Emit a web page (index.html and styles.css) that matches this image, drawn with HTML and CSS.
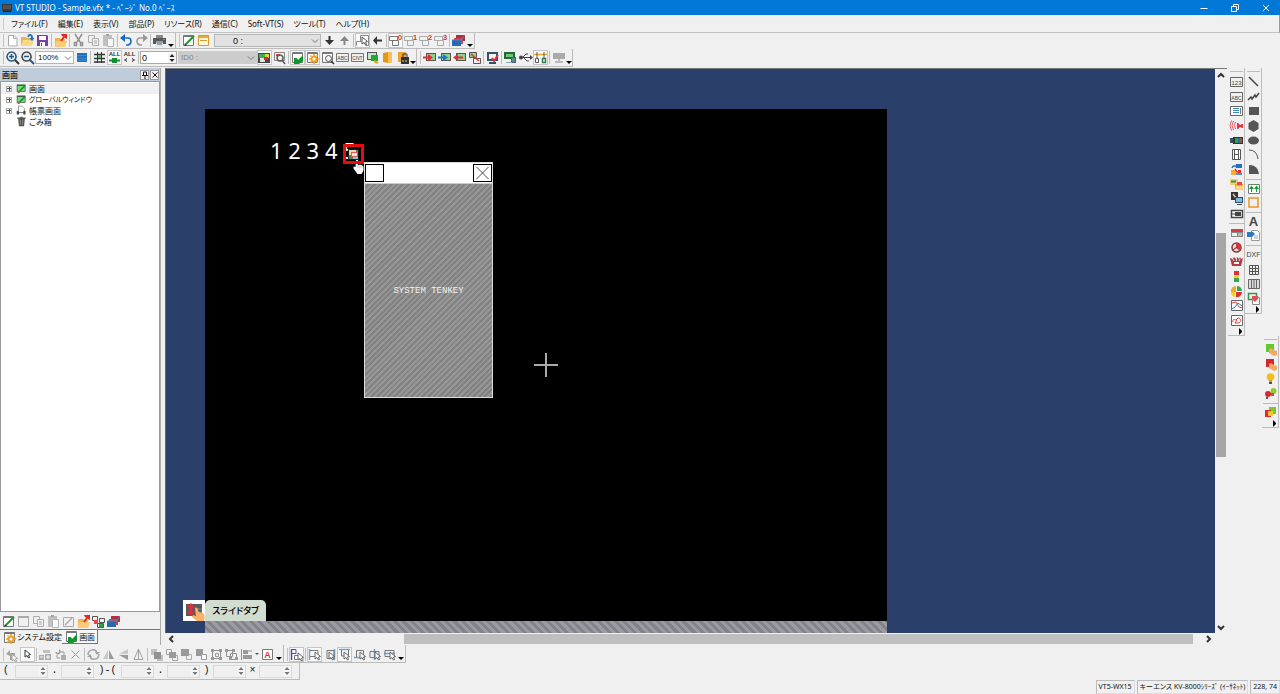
FILE: index.html
```html
<!DOCTYPE html>
<html lang="ja">
<head>
<meta charset="utf-8">
<title>VT STUDIO</title>
<link rel="stylesheet" href="styles.css">
</head>
<body>
<header class="titlebar">
  <svg class="logo" viewBox="0 0 12 10"><path d="M1 1h10v7H1z" fill="#3b3b3b"/><path d="M2 2h8v4H2z" fill="#55504c"/><path d="M2 8h8v1H2z" fill="#222"/></svg>
  <h1>VT STUDIO - Sample.vfx * - ﾍﾟｰｼﾞ No.0 ﾍﾞｰｽ</h1>
  <div class="winbtns">
    <button aria-label="最小化"><svg viewBox="0 0 10 10"><path d="M1.500 5.500h7" /></svg></button>
    <button aria-label="元に戻す"><svg viewBox="0 0 10 10"><path d="M1.500 3.500h5v5h-5zM3.500 3.500v-2h5v5h-2"/></svg></button>
    <button aria-label="閉じる"><svg viewBox="0 0 10 10"><path d="M2 2l6 6M8 2l-6 6"/></svg></button>
  </div>
</header>
<nav class="menubar">
  <button>ファイル(F)</button><button>編集(E)</button><button>表示(V)</button><button>部品(P)</button><button>リソース(R)</button><button>通信(C)</button><button>Soft-VT(S)</button><button>ツール(T)</button><button>ヘルプ(H)</button>
</nav>
<div class="row row-a">
  <div class="bar"><span data-tools="new open save | export | cut- copy- paste- | undo redo- | print"></span><button class="caret" aria-label="その他"></button></div>
  <div class="bar"><span data-tools="pencil window"></span>
    <label class="combo page"><select aria-label="ページ"><option>0 :</option></select><svg viewBox="0 0 8 6"><path d="M1 1.500l3 3 3-3"/></svg></label>
    <span data-tools="down up- | goto* left | ov0* ov1 ov2 ov3 | layers"></span><button class="caret" aria-label="その他"></button></div>
</div>
<div class="row row-b">
  <div class="bar"><span data-tools="zoomin zoomout"></span>
    <label class="combo zoom"><select aria-label="倍率"><option>100%</option></select><svg viewBox="0 0 8 6"><path d="M1 1.500l3 3 3-3"/></svg></label>
    <span data-tools="blue | grid all1* all2 |"></span>
    <label class="spin white"><input aria-label="状態" value="0"><svg viewBox="0 0 7 10"><path d="M1 4l2.500-3L6 4zM1 6l2.500 3L6 6z"/></svg></label>
    <label class="combo idc"><select aria-label="ID" disabled><option>ID0 :</option></select><svg viewBox="0 0 8 6"><path d="M1 1.500l3 3 3-3"/></svg></label>
    <span data-tools="colors* find | check* gear* look abc cnt tag book lock"></span><button class="caret" aria-label="その他"></button></div>
  <div class="bar"><span data-tools="inred inblue inleft swap | monitor | pcgreen usb net* | pcgray"></span><button class="caret" aria-label="その他"></button></div>
</div>
<main class="main">
  <aside class="panel">
    <div class="panel-head"><h2>画面</h2><button aria-label="固定"><svg viewBox="0 0 8 8"><path d="M2.500 1h3v3.500h-3zM1 4.500h6M4 5v3"/></svg></button><button aria-label="閉じる"><svg viewBox="0 0 8 8"><path d="M1.500 1.500l5 5M6.500 1.500l-5 5"/></svg></button></div>
    <ul class="tree">
      <li class="sel"><button class="plus" aria-label="展開"></button><span data-tools="screen"></span>画面</li>
      <li class="kana"><button class="plus" aria-label="展開"></button><span data-tools="screen"></span>グローバルウィンドウ</li>
      <li><button class="plus" aria-label="展開"></button><span data-tools="report"></span>帳票画面</li>
      <li class="leaf"><span data-tools="trash"></span>ごみ箱</li>
    </ul>
    <div class="panel-tools"><span data-tools="pencil window2- copy- paste- edit- export tree layers"></span></div>
    <div class="tabs"><button class="tab"><span data-icon="gear"></span>システム設定</button><button class="tab on"><span data-icon="check"></span>画面</button></div>
  </aside>
  <section class="view">
    <div class="canvas">
      <div class="screen">
        <div class="digits">1 2 3 4 5</div>
        <svg class="mark" viewBox="0 0 21 31"><path d="M13 16q1.500-1 2 0v5h1q1-1 2 0l1.500.5 1 1v4l-2 3.500h-4l-4-5.500v-2l2 .5z" fill="#fff"/><path d="M15 21v3M17 21.500v2.500M19 22v2" stroke="#888" stroke-width=".5"/><path d="M5 5h11v11H5z" fill="#17201c"/><path d="M6 6h9v9H6z" fill="#4d846b"/><path d="M6 6h7v5H6z" fill="#eed99b"/><path d="M8 8h7v5H8z" fill="#e35a54"/><path d="M9 9h5v3H9z" fill="#f4e1e1"/><path d="M10 13h5v2h-5z" fill="#88c6de"/><path d="M1.500 1.500h18v17h-18z" fill="none" stroke="#e90c0c" stroke-width="3"/></svg>
        <div class="tenkey">
          <div class="tk-head"><button aria-label="移動"></button><button aria-label="閉じる"><svg viewBox="0 0 18 18"><path d="M2 2l14 14M16 2L2 16"/></svg></button></div>
          <div class="tk-body">SYSTEM TENKEY</div>
        </div>
        <svg class="cross" viewBox="0 0 24 24"><path d="M0 12h24M12 0v24" stroke="#aaa" stroke-width="2"/></svg>
        <div class="slide">
          <span class="slide-ic"><svg viewBox="0 0 22 21"><path d="M3 4h16v12H3z" fill="#5a5a5d"/><path d="M13 9h6M13 12h6" stroke="#88888b"/><path d="M8 3l4 4.500h-2.500v4H12L8 16l-4-4.500h2.500v-4H4z" fill="#e82c36"/><path d="M12 8.500c0-1.500 2-1.500 2.500 0l1 3.500 4.500 1c2 1 2 5 1 8h-7l-5-4c0-2 2-2 4-1z" fill="#fab268"/></svg></span>
          <button class="slide-tab">スライドタブ</button>
        </div>
        <div class="strip"></div>
      </div>
    </div>
    <div class="vscroll"><svg viewBox="0 0 8 6"><path d="M1 5l3-3 3 3"/></svg><span class="thumb"></span><svg viewBox="0 0 8 6"><path d="M1 1l3 3 3-3"/></svg></div>
    <div class="hscroll"><svg viewBox="0 0 6 8"><path d="M5 1L2 4l3 3"/></svg><span class="thumb"></span><svg viewBox="0 0 6 8"><path d="M1 1l3 3-3 3"/></svg></div>
  </section>
  <div class="palettes">
    <div class="palette"><span class="g10" data-tools="n123 nabc list sound camera film parts folder screens button"></span><span class="g7" data-tools="switch meter gauge level pie graph loop"></span><button class="more" aria-label="その他"></button></div>
    <div class="palette"><span class="g7" data-tools="line poly rect hex ellipse arc fan"></span><span class="g2" data-tools="picture frame"></span><span class="g2" data-tools="letter docs"></span><span class="g4" data-tools="dxf table cols paste2"></span><button class="more" aria-label="その他"></button></div>
    <div class="palette low"><span class="g4" data-tools="handg handr bulb lamps"></span><span class="g1" data-tools="squares"></span><button class="more" aria-label="その他"></button></div>
  </div>
</main>
<div class="row row-c">
  <div class="bar"><span data-tools="back- arrow* | tiles- move- del- | rot- flip- fliph- tri- | st1- st2- st3- st4- grp- ungrp- align-"></span><button class="caret up" aria-label="展開"></button><span data-tools="redA"></span><button class="caret" aria-label="その他"></button></div>
  <div class="bar"><span data-tools="snap0* | snap1* snap2 snap3* snap4 snap5 snap6"></span><button class="caret" aria-label="その他"></button></div>
</div>
<div class="row row-d">
  <div class="coords">
    <b>(</b><label class="spin"><input aria-label="X1"><svg viewBox="0 0 7 10"><path d="M1 4l2.500-3L6 4zM1 6l2.500 3L6 6z"/></svg></label><b>.</b><label class="spin"><input aria-label="Y1"><svg viewBox="0 0 7 10"><path d="M1 4l2.500-3L6 4zM1 6l2.500 3L6 6z"/></svg></label><b class="wide">)-(</b><label class="spin"><input aria-label="X2"><svg viewBox="0 0 7 10"><path d="M1 4l2.500-3L6 4zM1 6l2.500 3L6 6z"/></svg></label><b>.</b><label class="spin"><input aria-label="Y2"><svg viewBox="0 0 7 10"><path d="M1 4l2.500-3L6 4zM1 6l2.500 3L6 6z"/></svg></label><b>)</b><label class="spin"><input aria-label="幅"><svg viewBox="0 0 7 10"><path d="M1 4l2.500-3L6 4zM1 6l2.500 3L6 6z"/></svg></label><b>×</b><label class="spin"><input aria-label="高さ"><svg viewBox="0 0 7 10"><path d="M1 4l2.500-3L6 4zM1 6l2.500 3L6 6z"/></svg></label>
  </div>
</div>
<footer class="status"><span>VT5-WX15</span><span>キーエンス KV-8000ｼﾘｰｽﾞ (ｲｰｻﾈｯﾄ)</span><span>228, 74</span></footer>
<script src="icons.js"></script>
</body>
</html>
```
FILE: styles.css
```css
* { box-sizing: border-box; }
body {
  margin: 0; height: 100vh; display: flex; flex-direction: column; overflow: hidden;
  background: #f0f0f0; color: #111;
  font: 8px/12px "Noto Sans", "Noto Sans CJK JP", sans-serif;
  font-feature-settings: "palt";
}
button, input, select { font: inherit; color: inherit; font-feature-settings: inherit; }
button { background: none; border: 0; padding: 0; margin: 0; }
svg { display: block; }

.titlebar { height: 15px; display: flex; align-items: center; background: #0078d7; color: #fff; }
.logo { width: 12px; height: 10px; margin: 0 2px 0 1px; }
.titlebar h1 { font: inherit; margin: 0; flex: 1; }
.winbtns { display: flex; gap: 2px; }
.winbtns button { width: 29px; height: 15px; display: grid; place-items: center; }
.winbtns svg { width: 10px; height: 10px; fill: none; stroke: #fff; }

.menubar { height: 18px; display: flex; align-items: center; gap: 10px; padding-left: 11px; border-bottom: 1px solid #c2c2c2; border-right: 1px solid #999; position: relative; }
.menubar::before { content: ""; position: absolute; left: 3px; top: 3px; bottom: 2px; width: 1px; background: #ccc; }

.row { display: flex; align-items: center; flex: none; }
.row-a { height: 16px; }
.row-b, .row-c { height: 18px; }
.row-d { height: 17px; }
.bar { height: 100%; display: flex; align-items: center; border-right: 1px solid #bbb; border-bottom: 1px solid #bbb; }
.row-c .bar { padding-top: 1px; }
.bar::before { content: ""; width: 1px; height: 13px; margin: 0 1px 0 3px; background: #c3c3c3; }
[data-tools] { display: flex; align-items: center; }
.tool { width: 15px; height: 15px; flex: none; }
.tool svg, [data-icon] svg { width: 15px; height: 15px; }
.tool.dim { filter: grayscale(1); opacity: .55; }
.tool.on { background: #fafafa; box-shadow: inset 0 0 0 1px #c6c6c6; }
.sep { width: 1px; height: 13px; margin: 0 1px; background: #bdbdbd; }
.caret { width: 8px; height: 14px; display: flex; align-items: flex-end; justify-content: center; }
.caret::after { content: ""; border: 3px solid transparent; border-top-color: #000; border-bottom: 0; margin-bottom: 1px; }
.row-b .caret { width: 6px; }
.caret.up { width: 6px; align-items: center; }
.caret.up::after { border-width: 2px; border-bottom: 0; border-top-color: #555; }

.combo { display: flex; align-items: center; position: relative; }
.combo select { appearance: none; width: 100%; height: 13px; border: 1px solid #b5b5b5; border-radius: 0; background: #fff; padding: 0 2px; font: 8px/10px "Liberation Sans", sans-serif; opacity: 1; }
.combo svg { position: absolute; right: 2px; width: 8px; height: 6px; fill: none; stroke: #777; }
.page { width: 107px; margin: 0 1px 0 3px; }
.page select { background: #e1e1e1; padding-left: 18px; font-size: 9px; }
.zoom { width: 39px; }
.idc { width: 79px; margin-left: 1px; }
.idc select { background: #ccc; color: #888; border-color: #ccc; }
.spin { width: 33px; height: 13px; display: flex; align-items: center; border: 1px solid #d9d9d9; }
.spin input { flex: 1; min-width: 0; height: 11px; border: 0; padding: 0 1px; background: none; font: 9px/10px "Liberation Sans", sans-serif; }
.spin svg { width: 8px; height: 10px; fill: #777; background: #f5f5f5; }
.white { width: 37px; background: #fff; border-color: #aaa; }
.white svg { fill: #222; }

.main { flex: 1; min-height: 0; display: flex; padding-top: 1px; }
.panel { width: 161px; margin-right: 4px; display: flex; flex-direction: column; border-right: 1px solid #aaa; }
.panel-head { height: 13px; display: flex; align-items: center; gap: 1px; padding: 0 1px 0 2px; background: #bfcddb; }
.panel-head h2 { font: 500 8px/12px "Noto Sans CJK JP", sans-serif; margin: 0; flex: 1; }
.panel-head button { width: 9px; height: 10px; background: #f4f4f4; border: 1px solid #999; display: grid; place-items: center; }
.panel-head svg { width: 8px; height: 8px; fill: none; stroke: #111; }
.tree { list-style: none; margin: 0; padding: 1px 0 0; flex: 1; background: #fff; border: 1px solid #999; }
.tree li { height: 11px; line-height: 11px; display: flex; align-items: center; padding-left: 5px; }
.tree .sel { background: #f0f0f0; }
.tree .kana { font-size: 7px; }
.tree .tool { height: 11px; margin: 0 0 0 2px; }
.tree .tool svg { height: 11px; }
.tree .leaf { padding-left: 11px; }
.plus { width: 6px; height: 6px; border: 1px solid #aaa; background: linear-gradient(#456, #456) center / 4px 1px no-repeat, linear-gradient(#456, #456) center / 1px 4px no-repeat; }
.panel-tools { height: 17px; padding: 2px 0 0 1px; }
.tabs { height: 16px; display: flex; border-top: 1px solid #777; }
.tab { display: flex; align-items: center; height: 14px; padding: 0 0 0 2px; }
.tab.on { border-right: 1px solid #777; border-bottom: 1px solid #777; background: #f6f6f6; padding-right: 2px; }

.view { flex: 1; min-width: 0; display: grid; grid-template: minmax(0, 1fr) 12px / minmax(0, 1fr) 12px; border-top: 1px solid #777; }
.canvas { position: relative; overflow: hidden; padding: 40px 328px 0 40px; background: #2a3e69 conic-gradient(#2c416b 25%, #283d67 0 50%, #2c416b 0 75%, #283d67 0) 0 0 / 2px 2px; border-left: 1px solid #666; display: flex; }
.screen { flex: 1; background: #000; position: relative; display: flex; flex-direction: column; justify-content: flex-end; margin-left: -1px; }
.digits { position: absolute; left: 65px; top: 27px; color: #fff; font: 22px/28px "Noto Sans", sans-serif; white-space: nowrap; }
.mark { position: absolute; left: 138px; top: 35px; width: 21px; height: 31px; z-index: 2; }
.tenkey { position: absolute; left: 159px; top: 53px; width: 129px; height: 236px; border: 1px solid #ddd; display: flex; flex-direction: column; }
.tk-head { height: 21px; display: flex; justify-content: space-between; align-items: center; background: #fff; border-bottom: 1px solid #ccc; }
.tk-head button { width: 19px; height: 18px; border: 1px solid #000; background: #fff; }
.tk-head svg { width: 17px; height: 16px; fill: none; stroke: #333; }
.tk-body { flex: 1; display: grid; place-items: center; color: #f0f0f0; font: 9px/12px "Liberation Mono", monospace; background: repeating-linear-gradient(135deg, #969696 0 2px, #828282 2px 4px); }
.cross { position: absolute; left: 329px; top: 244px; width: 24px; height: 24px; }
.slide { position: absolute; left: -22px; bottom: 12px; display: flex; z-index: 2; }
.slide-ic { width: 22px; height: 21px; background: #fff; }
.slide-ic svg { width: 22px; height: 21px; }
.slide-tab { width: 61px; height: 21px; border-radius: 5px 5px 0 0; background: #d2ddd2; color: #000; font-weight: 500; font-size: 9px; font-family: "Noto Sans CJK JP", sans-serif; }
.strip { height: 12px; background: repeating-linear-gradient(45deg, #9b9ca1 0 3px, #82848c 3px 6px); }
.vscroll, .hscroll { display: flex; align-items: center; background: #f0f0f0; }
.vscroll { flex-direction: column; justify-content: space-between; padding: 3px 0 2px; }
.vscroll svg { width: 8px; height: 6px; }
.hscroll svg { width: 6px; height: 8px; }
.vscroll svg, .hscroll svg { fill: none; stroke: #333; stroke-width: 2; }
.vscroll .thumb { width: 10px; height: 40%; background: #a6a6a6; margin-bottom: 13px; }
.hscroll { padding: 0 3px; }
.hscroll .thumb { flex: 1; height: 10px; background: #bfbfbf; margin: 0 13px 0 230px; }

.palettes { width: 53px; display: flex; align-items: flex-start; padding-left: 1px; }
.palette { width: 17px; display: flex; flex-direction: column; align-items: center; border-right: 1px solid #bbb; border-bottom: 1px solid #bbb; }
.palette::before { content: ""; width: 13px; height: 1px; margin: 3px 0 2px; background: #bbb; }
.palette [data-tools] { display: grid; grid-auto-rows: minmax(0, 1fr); }
.palette [data-tools] + [data-tools] { margin-top: 4px; position: relative; }
.palette [data-tools] + [data-tools]::before { content: ""; position: absolute; top: -2px; left: 0; right: 0; height: 1px; background: #bbb; }
.palette .tool { height: auto; }
.g10 { height: 147px; } .g7 { height: 103px; } .g4 { height: 59px; } .g2 { height: 29px; } .g1 { height: 15px; }
.more { height: 7px; width: 13px; display: flex; justify-content: flex-end; padding-right: 1px; }
.more::after { content: ""; border: 3px solid transparent; border-left: 3px solid #000; border-right: 0; }
.low { margin-top: 268px; }

.coords { height: 100%; display: flex; align-items: center; padding-left: 3px; border-right: 1px solid #bbb; border-bottom: 1px solid #bbb; padding-right: 7px; }
.coords b { font: 10px/12px "Liberation Mono", monospace; width: 13px; text-align: center; }
.coords .wide { width: 27px; }
.coords b:first-child { width: 12px; text-align: left; }
.status { height: 14px; display: flex; justify-content: flex-end; gap: 2px; font-size: 7px; }
.status span { border: 1px solid #bbb; border-right-color: #ddd; border-bottom-color: #ddd; padding: 0 2px; line-height: 12px; white-space: nowrap; }
```
FILE: icons.js
```js
const f = (d, c) => `<path d="${d}" fill="${c}"/>`;
const s = (d, c, w = 1) => `<path d="${d}" fill="none" stroke="${c}" stroke-width="${w}"/>`;
const t = (x, y, size, c, text, weight = 'bold') => `<text x="${x}" y="${y}" font-size="${size}" fill="${c}" text-anchor="middle" font-weight="${weight}" font-family="Liberation Sans">${text}</text>`;

const cursor = (x, y, c = '#444') => `<path d="M${x} ${y}v7l2-1.500 1.500 2.500 1-.5-1-2.500 2-.5z" fill="#fff" stroke="${c}"/>`;
const frame = s('M1.500 3.500h12v9h-12z', '#666');
const win = s('M2.500 2.500h10v10h-10z', '#777') + s('M2 3.500h11', '#777');
const screenGreen = f('M4 3h10v8H4z', '#555') + f('M5 4h8v6H5z', '#8ad38b');
const hand = f('M6 7l2-1 3 2 3 1v4l-3 1-5-3z', '#f3a868');

const ICONS = {
  new: f('M3 2h6l3 3v9H3z', '#fff') + s('M3.500 2.500h5.500l3 3v7.500h-8.500zM8.500 2.500v3h3', '#aaa'),
  open: f('M1 4h5l1 1h5v7H1z', '#e8b552') + f('M3 7h11l-2 6H1z', '#f9d78c') + s('M8 4c1-3 4-3 4 1', '#2270b8', 2) + f('M9.500 5h5L12 8z', '#2270b8'),
  save: f('M2 2h10l1 1v10H2z', '#7a3fa5') + f('M4 3h7v4H4zM5 9h5v4H5z', '#fff') + f('M6 10h1v3H6z', '#7a3fa5'),
  export: f('M2 5h5l1 1h4v8H2z', '#f0b54c') + f('M3 8h11l-2 6H2z', '#fbcb77') + s('M8 8l3-4', '#e02c22', 2) + f('M8 1h6v5l-2-1-3-2z', '#e02c22'),
  cut: s('M4 1l5 8M11 1L6 9', '#444', 1.5) + s('M3.500 9.500h2v3h-2zM9.500 9.500h2v3h-2z', '#444', 1.5),
  copy: s('M2.500 2.500h6v7h-6z', '#777') + f('M6 5h7v8H6z', '#f4f4f4') + s('M6.500 5.500h6v7h-6zM8 8h3M8 10h3', '#777'),
  paste: f('M2 2h9v11H2z', '#999') + f('M5 1h3v2H5z', '#666') + f('M6 5h7v9H6z', '#fff') + s('M6.500 5.500h6v8h-6z', '#888'),
  undo: s('M4 5h5c4 0 4 6 0 7H7', '#1769b8', 1.5) + f('M1 5l5-4v8z', '#1769b8'),
  redo: s('M11 5H6c-4 0-4 6 0 7h2', '#555', 1.5) + f('M14 5L9 1v8z', '#555'),
  print: f('M4 2h7v3H4z', '#888') + f('M1 5h13v6H1z', '#575757') + f('M4 8h7v6H4z', '#dbe7ee') + s('M4 9h7M5 11h5', '#555') + f('M11 6h2v1h-2z', '#4c9ac7'),
  pencil: f('M2 2h11v11H2z', '#fff') + s('M2.500 2.500h10v10h-10zM2 3.500h11', '#777') + s('M5 11l8-8', '#1d9630', 2) + f('M3 13l1-3 2 2z', '#333'),
  window: f('M2 2h11v11H2z', '#fff7da') + f('M2 2h11v3H2z', '#e9aa3b') + s('M2.500 2.500h10v10h-10zM4 7.500h7', '#d99a2e'),
  window2: s('M2.500 2.500h10v10h-10z', '#557799') + f('M2 2h11v2H2z', '#557799'),
  down: s('M7.500 3v6', '#333', 2) + f('M3 7h9l-4.500 5z', '#333'),
  up: s('M7.500 6v6', '#333', 2) + f('M3 8h9L7.500 3z', '#333'),
  left: s('M6 7.500h6', '#333', 2) + f('M7 3v9L3 7.500z', '#333'),
  goto: s('M1.500 12.500v-4h5M5.500 8v-5.500h8v10h-3', '#888') + cursor(7, 4, '#555'),
  layers: f('M5 2h9v6H5z', '#a93345') + f('M3 5h9v6H3z', '#cf4250') + f('M1 7h9v6H1z', '#246bb4') + s('M1 7h9l4-5', '#5a82ad'),
  zoomin: s('M6.500 2a4.500 4.500 0 1 0 .1 0', '#235889', 1.5) + s('M10 10l4 4', '#333', 2) + s('M4 6.500h5M6.500 4v5', '#235889', 1.5),
  zoomout: s('M6.500 2a4.500 4.500 0 1 0 .1 0', '#444', 1.5) + s('M10 10l4 4', '#235889', 2) + s('M4 6.500h5', '#235889', 1.5),
  blue: f('M3 3h10v9H3z', '#2370bd') + s('M3 5.500h10M3 8.500h10M3 10.500h10', '#579adc', .5),
  grid: s('M5.500 2v11M9.500 2v11', '#333') + s('M2 4.500h11M2 8.500h11M2 12h11', '#333', 1.5) + f('M6 5h3v3H6z', '#57bf65'),
  all1: t(7.5, 6, 6, '#333', 'ALL') + f('M5 8h5v5H5z', '#178d34') + s('M2 10.500h11', '#178d34', 2),
  all2: t(7.5, 6, 6, '#333', 'ALL') + s('M5 8l-2 2 2 2M10 8l2 2-2 2M2 10h3M10 10h3', '#555'),
  colors: f('M1 3h12v10H1z', '#444') + f('M2 4h6v4H2z', '#36b54a') + f('M8 4h4v4H8z', '#e8cc3d') + f('M3 8h5v4H3z', '#e5e5e5') + f('M7 7h4v3H7z', '#e52525'),
  find: s('M2.500 2.500h10v8h-10z', '#888') + s('M4 5h4', '#e04545', 2) + s('M8 5a3 3 0 1 0 .1 0M10 10l3 4', '#555', 1.5),
  check: f('M2 2h11v9H2z', '#fff') + win + f('M4 8l3 0 1 2 5-5v6l-4 3H4z', '#12942c'),
  gear: f('M2 2h11v9H2z', '#fff') + win + `<circle cx="9" cy="9" r="2.500" fill="#fff" stroke="#eda126" stroke-width="2"/>` + s('M9 4v2M9 12v2M4 9h2M12 9h2M5.500 5.500l1 1M11.500 11.500l1 1M12.500 5.500l-1 1M5.500 12.500l1-1', '#eda126', 1.5),
  look: f('M2 2h11v9H2z', '#fff') + win + `<circle cx="8.500" cy="8.500" r="3" fill="#f5f5f5" stroke="#555"/>` + s('M11 11l3 3', '#333', 1.5),
  abc: s('M1.500 3.500h12v8h-12z', '#777') + t(7.5, 10, 5, '#444', 'ABC', 'normal'),
  cnt: s('M1.500 3.500h12v8h-12z', '#777') + t(7.5, 10, 5, '#444', 'CNT', 'normal'),
  tag: f('M2 2h10v8H2z', '#555') + f('M3 3h8v6H3z', '#c9e4cb') + f('M6 5h7v6H6z', '#1faa37') + s('M9 11l4 2', '#eda126', 2.5),
  book: f('M3 3l5-1v11l-5-1z', '#e29717') + f('M8 2h4v11H8z', '#f8c158'),
  lock: f('M3 2h8v10H3z', '#efa32a') + f('M6 7h8v7H6z', '#333') + s('M8 7V4h4v3', '#333') + s('M8 10v2M11 10v2', '#f1ca8a'),
  inred: screenGreen + s('M1 7.500h6', '#e22e35', 2) + f('M6 4l5 3.500L6 11z', '#e22e35'),
  inblue: screenGreen + s('M1 7.500h6', '#1d76c9', 2) + f('M6 4l5 3.500L6 11z', '#1d76c9'),
  inleft: screenGreen + s('M6 7.500h5', '#e22e35', 2) + f('M6 4L1 7.500 6 11z', '#e22e35'),
  swap: s('M2.500 2.500h7v5h-7zM6.500 8.500h7v5h-7z', '#555') + f('M3 3h6v4H3z', '#8ad38b') + s('M4 4l8 7', '#e03440', 1.5),
  monitor: f('M2 2h11v9H2z', '#34516c') + f('M4 4h7v5H4z', '#f2f2f2') + s('M7 8l2 3 4-6', '#e22e35', 2) + s('M4 13h7', '#34516c', 2),
  pcgreen: f('M1 2h11v7H1z', '#29643c') + f('M3 4h7v3H3z', '#67c96c') + f('M8 7h5v6H8z', '#3d6271') + s('M3 12.500h6M9 9h3M9 11h3', '#8ab'),
  usb: s('M2 7.500h11M5 7l3-3h2M6 8l3 3h2', '#444') + f('M12 5l3 2.500-3 2.500z', '#444') + `<circle cx="3" cy="7.500" r="2" fill="#444"/>`,
  net: s('M1 4.500h13', '#eaa52e', 1.5) + s('M4 2v6M11 2v6', '#555') + s('M2.500 8.500h3v4h-3z', '#555') + s('M9.500 8.500h3v4h-3z', '#2c7b48', 1.5),
  pcgray: f('M2 3h12v6H2z', '#aaa') + f('M7 9h2v3H7zM4 11h8v2H4z', '#bbb'),
  screen: f('M1 2h12v10H1z', '#3e5a48') + f('M2 4h10v7H2z', '#72dc77') + s('M5 11l7-7', '#138a31', 2) + f('M2 14l1-4 3 3z', '#964'),
  report: s('M3.500 1.500h5l3 3v7', '#888') + f('M1 8h12v5H1z', '#444') + f('M4 7h6v3H4z', '#fff') + s('M3.500 1v8', '#777') + f('M4 11h6v3H4z', '#fff'),
  trash: f('M3 4h9l-1 10H4z', '#555') + f('M2 2h11v2H2zM6 1h3v1H6z', '#555') + s('M6 5v7M9 5v7', '#999'),
  edit: s('M2.500 3.500h10v9h-10z', '#579') + s('M4 11l7-7', '#579', 1.5),
  tree: s('M1.500 2.500h5v4h-5zM8.500 4.500h5v4h-5zM6.500 9.500h6v4h-6z', '#555') + f('M3 6h4v4H3z', '#e44') + f('M8 10h4v3H8z', '#2da447'),
  n123: frame + t(7.5, 10.5, 6, '#444', '123', 'normal'),
  nabc: frame + t(7.5, 10.5, 5, '#444', 'ABC', 'normal'),
  list: f('M2 3h11v9H2z', '#fff') + frame + s('M4 5.500h6M4 7.500h6M4 9.500h6', '#3b87cf') + s('M11.500 5v6', '#777'),
  sound: f('M8 5h1l2 2 2-1h1v4h-1l-2-1-2 2H8z', '#e6353e') + s('M6.500 4q-2 3.500 0 7M4.500 3q-3 4.500 0 9M2.500 2.500q-3 5 0 10', '#ef5960'),
  camera: f('M4 4h10v7H4z', '#333') + f('M1 5h3v5H1z', '#356') + f('M6 5h3v5H6z', '#25a34b') + f('M9 5h2v5H9z', '#2672a5') + f('M11 5h2v5h-2z', '#9b573d'),
  film: f('M3 2h9v11H3z', '#fff') + s('M3.500 2.500h8v10h-8zM5.500 2v11M9.500 2v11M5 7.500h5', '#555'),
  parts: f('M7 2h6v4H7z', '#246fc1') + f('M2 8h5v5H2z', '#f4af31') + f('M9 8h3v3H9z', '#e22f36') + s('M3 6c1-3 4-3 5 0M7 12h6', '#246fc1', 1.5) + s('M6 7l2 3h4', '#e22f36', 1.5),
  folder: f('M1 2h8v6H1z', '#f3ce72') + s('M2 4.500h5', '#349748', 2) + f('M6 7h8v6H6z', '#f1aa36') + f('M8 5h5v3H8z', '#e5484d') + f('M7 9h8l-2 4H6z', '#ffd57a'),
  screens: f('M2 1h7v8H2z', '#333') + s('M4 3l3 4', '#e1c49b', 1.5) + f('M6 6h8v6H6z', '#2b4f69') + f('M7 7h6v4H7z', '#79bce4') + s('M8 13.500h5', '#444'),
  button: f('M2 4h12v8H2z', '#fff') + s('M2.500 4.500h11v7h-11z', '#444', 1.5) + f('M6 6h6v4H6z', '#444') + s('M3 8h3', '#444'),
  switch: f('M2 4h12v8H2z', '#888') + f('M2 4h12v3H2z', '#d43e45') + f('M3 8h5v3H3z', '#eee') + f('M9 8h4v3H9z', '#bbb'),
  meter: `<circle cx="7.500" cy="7.500" r="4.500" fill="#e7dada" stroke="#8b3338" stroke-width="1.500"/>` + f('M7 8V3a5 5 0 0 1 4 8z', '#d5343b') + s('M4 10l4-3', '#333'),
  gauge: f('M1 4l3 1 1-2 2 2 1-2 2 2 1-2 1 2 2-1-2 8H3z', '#b23a42') + s('M4 5l1 2M7.500 4v3M11 5l-1 2', '#ddd') + f('M5 8h5v2H5z', '#eee'),
  level: f('M5 2h5v4H5z', '#dc3038') + f('M5 6h5v3H5z', '#efd02d') + f('M5 9h5v4H5z', '#32a650'),
  pie: f('M8 7V2a5 5 0 0 1 5 5z', '#36a852') + f('M7 8H2a5 5 0 0 1 5-6z', '#e8ae27') + f('M7 8h6a5 5 0 0 1-6 5z', '#dc3038') + f('M6 8v5a5 5 0 0 1-4-5z', '#efd02d'),
  graph: f('M2 2h12v11H2z', '#fff') + s('M2.500 2.500h11v10h-11z', '#666') + s('M3 5l4-1 3 5 3 1', '#e0434a') + s('M3 11l3-2 3-4 4 3', '#287ec7'),
  loop: f('M2 2h12v11H2z', '#fff') + s('M2.500 2.500h11v10h-11z', '#666') + s('M4 9c-1-2 1-3 3-2l2-2c4 0 3 5 0 5H6l2-3', '#dc3f46'),
  line: s('M3 3l9 9', '#444', 1.5),
  poly: s('M2 11l3-3 1 2 3-4 1 2 3-4', '#444', 1.5),
  rect: f('M3 4h10v8H3z', '#555'),
  hex: f('M7.500 2l5 3v6l-5 3-5-3V5z', '#555'),
  ellipse: `<ellipse cx="7.500" cy="7.500" rx="5.500" ry="4" fill="#555"/>`,
  arc: s('M3 3q8 0 9 9', '#555'),
  fan: f('M3 3q9 0 10 9H3z', '#555'),
  picture: f('M2 3h12v10H2z', '#fff') + s('M2.500 3.500h11v9h-11z', '#66846f') + f('M5.500 4.500L8 8H3zM10.500 4.500L13 8H8z', '#159c38') + s('M5.500 7v4M10.500 7v4', '#159c38'),
  frame: s('M3 3h9v9H3z', '#e59626', 1.5),
  letter: t(7.5, 12, 13, '#444', 'A'),
  docs: f('M5 2h7l2 2v9H5z', '#fff') + s('M5.500 2.500h6l2 2v8h-8z', '#999') + f('M1 4h6l2 2-3 3H1z', '#2c7bc1') + s('M8 8h4M8 10h4', '#aaa'),
  dxf: t(7.5, 10, 7, '#444', 'DXF', 'normal'),
  table: s('M3.500 3.500h9v9h-9zM6.500 3v10M9.500 3v10M3 6.500h10M3 9.500h10', '#555'),
  cols: f('M2 3h12v10H2z', '#ddd') + s('M2.500 3.500h11v9h-11zM5.500 3v10M8 3v10M10.500 3v10', '#666'),
  paste2: s('M2.500 2.500h8v6h-8z', '#379650', 1.5) + f('M6 6h8v7H6z', '#fff') + s('M6.500 6.500h7v7h-7z', '#888') + f('M6 5h6v3l-3 3-3-3z', '#e24f56'),
  handg: f('M3 2h8v8H3z', '#64c82d') + hand,
  handr: f('M3 2h8v8H3z', '#da252b') + hand,
  bulb: `<circle cx="7.500" cy="6" r="3.800" fill="#f5bd18"/>` + f('M6 9h3v2H6z', '#cda42a') + f('M6 11h3v2H6z', '#555'),
  lamps: `<circle cx="10.500" cy="5" r="3" fill="#8cce30"/><circle cx="5" cy="8" r="3" fill="#d9282d"/>` + f('M8 7h3v3H8z', '#d9482d') + s('M4 11v2', '#555', 2),
  squares: f('M6 2h7v7H6z', '#75cc2b') + f('M2 5h6v7H2z', '#e32b28') + f('M5 6h5v5H5z', '#f5c62a'),
  back: f('M1 7l4-4v3h5v7H5V9z', '#666') + cursor(7, 7, '#666'),
  arrow: cursor(5, 3, '#333'),
  tiles: f('M1 8h5v5H1zM7 7h6v6H7z', '#777') + f('M5 3h7v3H5z', '#999') + s('M2 10h3M8 10h4M10 8v4', '#fff'),
  move: s('M3 5a2 2 0 1 0 3-2', '#555', 1.5) + s('M7 5h4v3M4 8v3h3', '#555') + f('M8 8h5v5H8z', '#777'),
  del: s('M3.500 3.500l8 8M11.500 3.500l-8 8', '#555'),
  rot: s('M2 8c0-6 8-7 9-2M13 7c0 6-8 7-9 2', '#666', 1.5) + f('M9 5h5l-3 3zM1 10h5L4 7z', '#666'),
  flip: f('M2 12h5V3z', '#aaa') + f('M8 3v9h5z', '#555'),
  fliph: f('M12 2v5H3z', '#aaa') + f('M3 8h9v5z', '#555'),
  tri: s('M7.500 2L3 12.500h9zM7.500 2v10', '#666'),
  st1: f('M2 2h6v6H2zM8 8h6v6H8z', '#999') + f('M5 5h7v7H5z', '#444'),
  st2: s('M2.500 2.500h5v5h-5zM8.500 8.500h5v5h-5z', '#666') + f('M5 5h7v6H5z', '#555'),
  st3: s('M7.500 7.500h5v5h-5z', '#777') + f('M2 2h8v7H2z', '#555'),
  st4: f('M2 2h7v7H2z', '#555') + f('M7 7h6v6H7z', '#fff') + s('M7.500 7.500h5v5h-5z', '#555'),
  grp: s('M3.500 3.500h8v8h-8z', '#444') + f('M2 2h3v3H2zM10 2h3v3h-3zM2 10h3v3H2zM10 10h3v3h-3z', '#555') + s('M6.500 6.500h3v3h-3z', '#555'),
  ungrp: s('M2.500 3.500h6v6h-6zM6.500 6.500h6v6h-6z', '#444') + f('M1 2h3v3H1zM8 2h3v3H8zM5 10h3v3H5zM11 10h3v3h-3z', '#555'),
  align: s('M2.500 2v11', '#444') + f('M4 3h5v4H4zM4 8h9v4H4z', '#555') + s('M8 4h5', '#555'),
  redA: f('M2 2h11v11H2z', '#fff') + s('M2.500 2.500h10v10h-10z', '#777') + t(7.5, 11, 9, '#d6333a', 'A'),
  snap0: s('M2.500 13V2', '#5c43b5', 1.5) + s('M3 2.500h4v4H3', '#5c43b5') + s('M5.500 8.500h5v4h-5z', '#777') + cursor(9, 6, '#666'),
  snap1: s('M2.500 2v11', '#6aa4df', 1.5) + s('M3 3.500h8v6H3', '#777') + cursor(8, 5, '#666'),
  snap2: s('M12.500 2v11', '#6aa4df', 1.5) + s('M5 3.500h7v8H5z', '#777') + cursor(7, 5, '#666'),
  snap3: s('M2 2.500h11', '#6aa4df', 1.5) + s('M4.500 3v6h7V3', '#777') + cursor(7, 5, '#666'),
  snap4: s('M2 10.500h11', '#6aa4df', 1.5) + s('M4.500 10V3.500h7V10', '#777') + cursor(8, 5, '#666'),
  snap5: s('M7.500 2v11', '#6aa4df', 1.5) + s('M3 4.500h9v6H3z', '#777') + cursor(8, 5, '#666'),
  snap6: s('M2 6.500h11', '#6aa4df', 1.5) + s('M3 3.500h9v6H3z', '#777') + cursor(8, 5, '#666')
};
for (let n = 0; n < 4; n++) {
  ICONS['ov' + n] = s('M1.500 3.500h8v4h-8zM4.500 7.500h6v5h-6z', n ? '#aaa' : '#777') + t(12, 7, 8, '#d9333a', n);
}

const svg = (name) => `<svg viewBox="0 0 15 15" aria-hidden="true">${ICONS[name]}</svg>`;

document.querySelectorAll('[data-tools]').forEach((el) => {
  el.innerHTML = el.dataset.tools.split(' ').map((token) => {
    if (token === '|') return '<i class="sep"></i>';
    const name = token.replace(/[-*]$/, '');
    const state = token.endsWith('-') ? ' dim' : token.endsWith('*') ? ' on' : '';
    return `<button class="tool${state}" aria-label="${name}">${svg(name)}</button>`;
  }).join('');
});
document.querySelectorAll('[data-icon]').forEach((el) => { el.innerHTML = svg(el.dataset.icon); });
```
